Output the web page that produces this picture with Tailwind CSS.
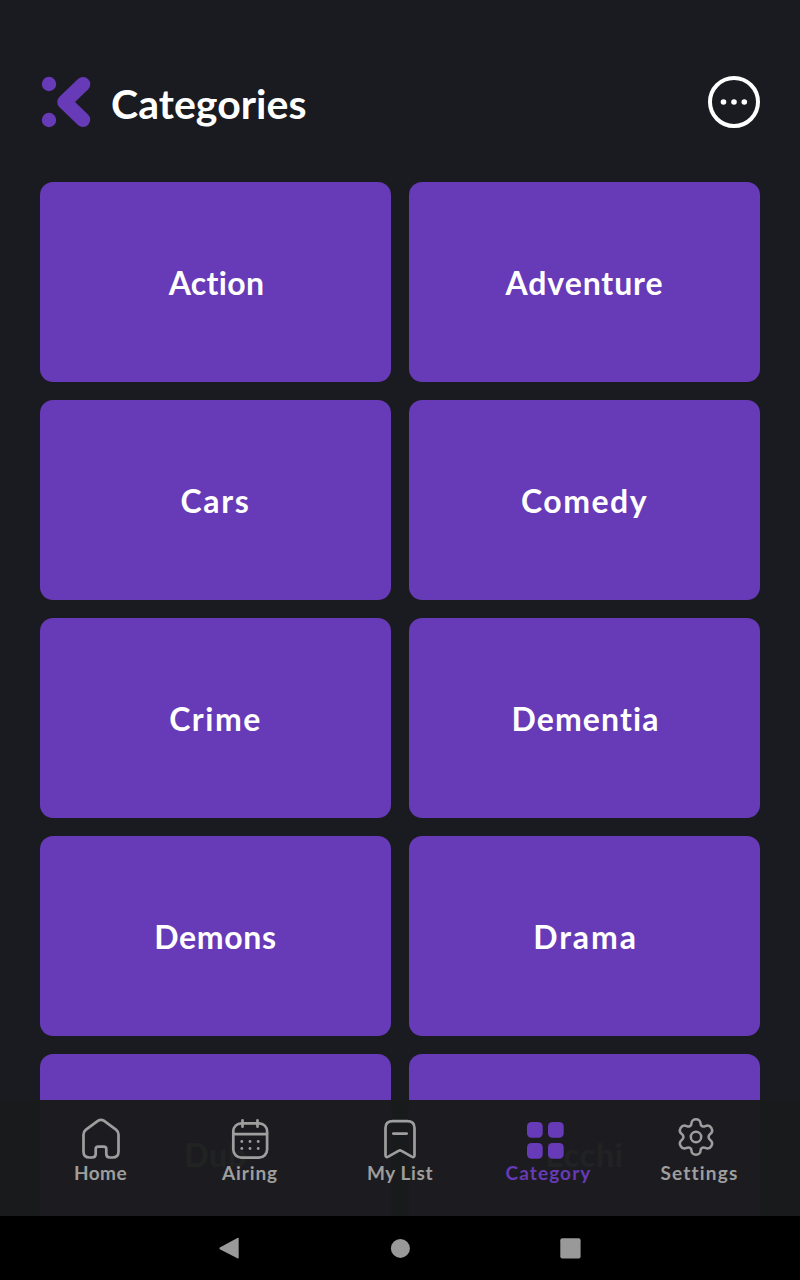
<!DOCTYPE html>
<html lang="en">
<head>
<meta charset="utf-8">
<title>Categories</title>
<script src="https://cdn.jsdelivr.net/npm/@tailwindcss/browser@4"></script>
</head>
<body class="bg-[#1a1b20]">
<div class="relative flex h-[1280px] w-[800px] flex-col overflow-hidden bg-[#1a1b20] font-['Lato','Open_Sans',sans-serif] font-bold text-white">
  <header class="flex h-[182px] shrink-0 items-start px-10 pt-[76px]">
    <svg class="h-[52px] w-[52px]" viewBox="0 0 52 52" fill="#673ab7">
      <circle cx="9" cy="8" r="7.2"/><circle cx="9" cy="44" r="7.2"/>
      <path d="M43 8.300L24.500 26L43 43.800" fill="none" stroke="#673ab7" stroke-width="14.500" stroke-linecap="round" stroke-linejoin="round"/>
    </svg>
    <h1 class="ml-[19px] mt-1 text-[41px] leading-[48px] tracking-[0.05px] whitespace-nowrap">Categories</h1>
    <svg class="ml-auto h-[52px] w-[52px]" viewBox="0 0 52 52" fill="#fff">
      <circle cx="26" cy="26" r="24" fill="none" stroke="#fff" stroke-width="4"/>
      <circle cx="15.500" cy="26" r="2.800"/><circle cx="26" cy="26" r="2.800"/><circle cx="36.300" cy="26" r="2.800"/>
    </svg>
  </header>
  <main class="grid grid-cols-2 gap-[18px] px-10 text-[32px] leading-10 *:flex *:h-[200px] *:items-center *:justify-center *:rounded-[13px] *:bg-[#673ab7] *:pt-0.5">
    <div><span class="pl-0.5 tracking-[0.3px]">Action</span></div>
    <div><span class="tracking-[0.9px]">Adventure</span></div>
    <div><span class="tracking-[1.7px]">Cars</span></div>
    <div><span class="tracking-[1.5px]">Comedy</span></div>
    <div><span class="tracking-[1.5px]">Crime</span></div>
    <div><span class="pl-0.5 tracking-[1.1px]">Dementia</span></div>
    <div><span class="tracking-[0.7px]">Demons</span></div>
    <div><span class="pl-0.5 tracking-[1.9px]">Drama</span></div>
    <div><span class="tracking-[0.8px]">Dub</span></div>
    <div><span class="tracking-[0.8px]">Ecchi</span></div>
  </main>
  <div class="absolute inset-x-0 bottom-0">
    <nav class="grid h-[116px] grid-cols-5 bg-[#1a1b1b]/97 px-[25px] pt-[14px] text-[19px] leading-[22px] text-[#9e9e9e] *:flex *:flex-col *:items-center">
      <a>
        <svg class="h-12 w-12 shrink-0" viewBox="0 0 48 48" fill="none" stroke="currentColor" stroke-width="2.700" stroke-linejoin="round">
          <path d="M7.500 20.500Q7.500 17.500 10 15.600L22.200 6.700Q25 4.900 27.800 6.700L40 15.600Q42.500 17.500 42.500 20.500V37.500Q42.500 43.500 36.500 43.500H34Q30.300 43.500 30.300 40V35Q30.300 32.600 27.800 32.600H22.200Q19.700 32.600 19.700 35V40Q19.700 43.500 16 43.500H13.500Q7.500 43.500 7.500 37.500Z"/>
        </svg>
        <span class="pl-px tracking-[0.4px]">Home</span>
      </a>
      <a>
        <svg class="h-12 w-12 shrink-0" viewBox="0 0 48 48" fill="none" stroke="currentColor" stroke-width="2.700" stroke-linecap="round">
          <rect x="7.300" y="9.300" width="33.800" height="34.300" rx="8"/><path d="M7.500 20.100H41M16.500 6.300V12.700M31.500 6.300V12.700"/>
          <g fill="currentColor" stroke="none"><circle cx="15.800" cy="27.500" r="1.400"/><circle cx="24" cy="27.500" r="1.400"/><circle cx="32.200" cy="27.500" r="1.400"/><circle cx="15.800" cy="34.500" r="1.400"/><circle cx="24" cy="34.500" r="1.400"/><circle cx="32.200" cy="34.500" r="1.400"/></g>
        </svg>
        <span class="tracking-[0.9px]">Airing</span>
      </a>
      <a>
        <svg class="h-12 w-12 shrink-0" viewBox="0 0 48 48" fill="none" stroke="currentColor" stroke-width="2.700" stroke-linecap="round" stroke-linejoin="round">
          <path d="M9.500 14Q9.500 7.200 17 7.200H31Q38.500 7.200 38.500 14V41Q38.500 44 35.700 42.600L25.500 36.800Q24 35.900 22.500 36.800L12.300 42.600Q9.500 44 9.500 41Z"/><path d="M17.300 19.600H30.700"/>
        </svg>
        <span class="tracking-[0.6px]">My List</span>
      </a>
      <a class="text-[#673ab7]">
        <svg class="mr-[10px] h-12 w-12 shrink-0" viewBox="0 0 48 48" fill="currentColor">
          <rect x="6" y="8" width="15.700" height="15.700" rx="4.500"/><rect x="27" y="8" width="15.700" height="15.700" rx="4.500"/><rect x="6" y="29" width="15.700" height="15.700" rx="4.500"/><rect x="27" y="29" width="15.700" height="15.700" rx="4.500"/>
        </svg>
        <span class="mr-[3px] tracking-[1.1px]">Category</span>
      </a>
      <a>
        <svg class="mr-[9px] h-12 w-12 shrink-0" viewBox="0 0 48 48" fill="none" stroke="currentColor" stroke-width="2.500" stroke-linejoin="round">
          <circle cx="24" cy="23" r="5.200"/>
          <path d="M24 5.300C26.500 5.300 28.500 6.800 28.500 9.200C28.500 12 31 13.200 33.300 12.100C35.700 10.900 38 11.700 39.400 14C40.700 16.300 40.200 18.500 38.200 20C36 21.600 36 24.400 38.200 26C40.200 27.500 40.700 29.700 39.400 32C38 34.300 35.700 35.100 33.300 33.900C31 32.800 28.500 34 28.500 36.800C28.500 39.200 26.500 40.700 24 40.700C21.500 40.700 19.500 39.200 19.500 36.800C19.500 34 17 32.800 14.700 33.900C12.300 35.100 10 34.300 8.600 32C7.300 29.700 7.800 27.500 9.800 26C12 24.400 12 21.600 9.800 20C7.800 18.500 7.300 16.300 8.600 14C10 11.700 12.300 10.900 14.700 12.100C17 13.200 19.500 12 19.500 9.200C19.500 6.800 21.500 5.300 24 5.300Z"/>
        </svg>
        <span class="mr-px tracking-[1.2px]">Settings</span>
      </a>
    </nav>
    <div class="flex h-16 items-center justify-center gap-[146px] bg-black">
      <svg class="h-6 w-6" viewBox="0 0 24 24" fill="#999"><path d="M1.800 11.600L19.400 1.900Q20.700 1.300 20.700 2.600V21.600Q20.700 22.900 19.400 22.300L1.800 13.200Q.8 12.400 1.800 11.600Z"/></svg>
      <svg class="h-6 w-6" viewBox="0 0 24 24" fill="#999"><circle cx="12.400" cy="12.400" r="9.500"/></svg>
      <svg class="h-6 w-6" viewBox="0 0 24 24" fill="#999"><rect x="2.300" y="2.300" width="20.300" height="20.300" rx="2"/></svg>
    </div>
  </div>
</div>
</body>
</html>
